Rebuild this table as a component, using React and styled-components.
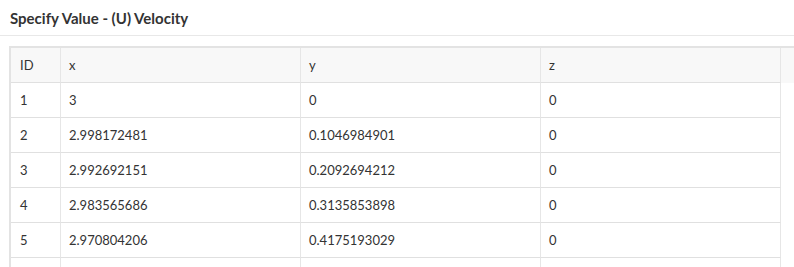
import styled, { createGlobalStyle } from 'styled-components';

const GlobalStyle = createGlobalStyle`
  html, body {
    margin: 0;
    padding: 0;
    background: #fff;
    overflow: hidden;
  }
  body {
    font-family: Lato, "Open Sans", Arial, sans-serif;
    color: #333;
  }
`;

const rows = [
  { id: 1, x: '3', y: '0', z: '0' },
  { id: 2, x: '2.998172481', y: '0.1046984901', z: '0' },
  { id: 3, x: '2.992692151', y: '0.2092694212', z: '0' },
  { id: 4, x: '2.983565686', y: '0.3135853898', z: '0' },
  { id: 5, x: '2.970804206', y: '0.4175193029', z: '0' },
  { id: 6, x: '', y: '', z: '' },
];

/*
* === Panel ===
*/
const Panel = styled.div`
  width: 794px;
  height: 267px;
  overflow: hidden;
`;

const PanelHeader = styled.div`
  height: 35px;
  border-bottom: 1px solid #e8e8e8;
  display: flex;
  align-items: center;
  padding-left: 10px;
  font-size: 15px;
  font-weight: 700;
  color: #333;
`;

const PanelBody = styled.div`
  padding: 10px 0 0 9px;
`;

/*
* === Grid ===
*/
const Grid = styled.div`
  border-top: 2px solid #e3e3e3;
  border-left: 2px solid #e3e3e3;
`;

const Row = styled.div`
  display: grid;
  grid-template-columns: 50px 240px 240px 240px 1fr;
  height: 35px;
  background: ${(p) => (p.$head ? '#f8f8f8' : '#fff')};
`;

const Cell = styled.div`
  display: flex;
  align-items: center;
  padding-left: ${(p) => (p.$first ? '9px' : '8px')};
  border-right: 1px solid #e6e6e6;
  border-bottom: 1px solid #e0e0e0;
  font-size: 13px;
  color: #333;
`;

const Gutter = styled.div`
  border-bottom: ${(p) => (p.$head ? '1px solid #f8f8f8' : 'none')};
`;

export default function App() {
  return (
    <Panel>
      <GlobalStyle />
      <PanelHeader>Specify Value - (U) Velocity</PanelHeader>
      <PanelBody>
        <Grid>
          <Row $head>
            <Cell $first>ID</Cell>
            <Cell>x</Cell>
            <Cell>y</Cell>
            <Cell>z</Cell>
            <Gutter $head />
          </Row>
          {rows.map((r) => (
            <Row key={r.id}>
              <Cell $first>{r.x === '' ? '' : r.id}</Cell>
              <Cell>{r.x}</Cell>
              <Cell>{r.y}</Cell>
              <Cell>{r.z}</Cell>
              <Gutter />
            </Row>
          ))}
        </Grid>
      </PanelBody>
    </Panel>
  );
}
